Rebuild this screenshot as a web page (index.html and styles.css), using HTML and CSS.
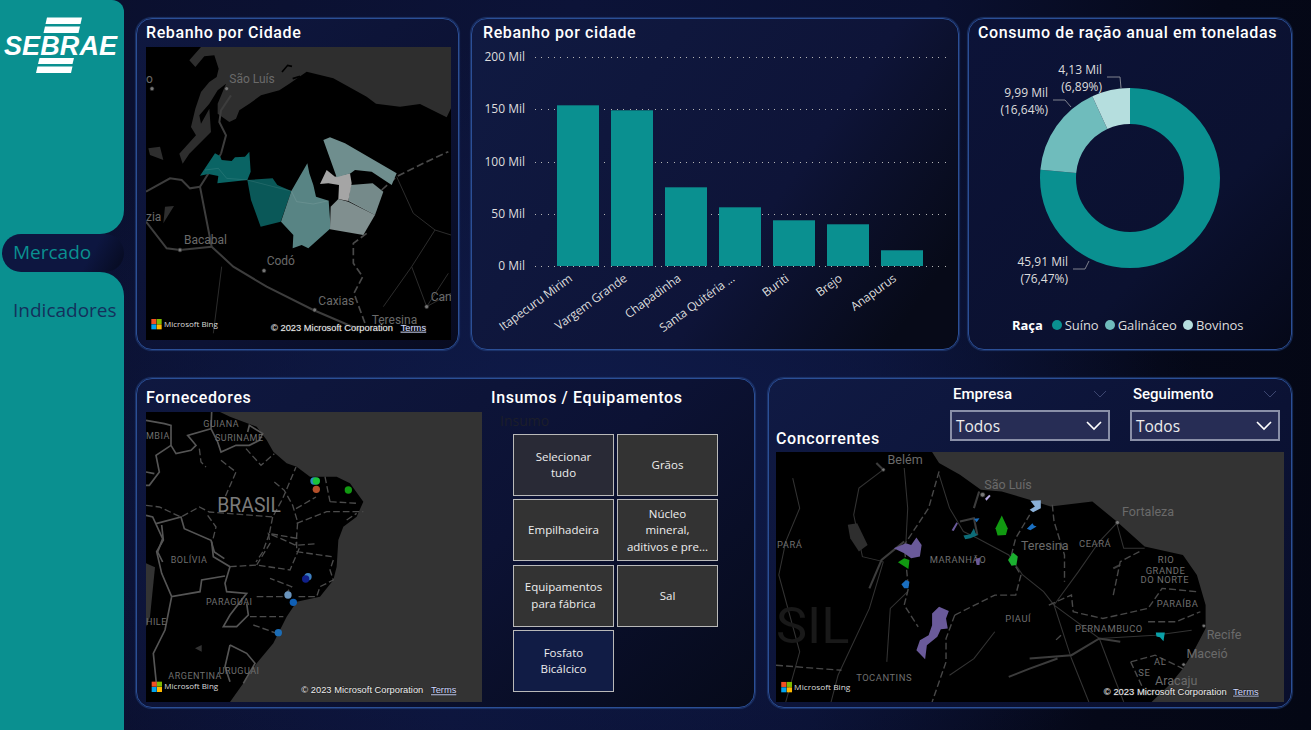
FILE: index.html
```html
<!DOCTYPE html>
<html>
<head>
  <title>Painel Sebrae - Mercado</title>
  <meta name="viewport" content="width=device-width, initial-scale=1">
  <link rel="stylesheet" href="styles.css">
</head>
<body>
  <aside class="sidebar">
    <div class="side-top">
      <svg class="logo" viewBox="0 0 124 80" width="124" height="80">
        <polygon points="47,17.5 82,17.5 80.5,24 45.5,24" fill="#fff"/>
        <polygon points="45,26.5 80,26.5 78.5,33 43.5,33" fill="#fff"/>
        <polygon points="39.5,58 74,58 72.5,64 38,64" fill="#fff"/>
        <polygon points="37.5,66.5 72.5,66.5 71,73 36,73" fill="#fff"/>
        <text class="logo-text" x="4" y="55">SEBRAE</text>
      </svg>
    </div>
    <div class="side-tab"><div class="tab-pill">Mercado</div></div>
    <div class="side-bottom"><div class="side-link">Indicadores</div></div>
  </aside>

  <main class="main">
    <div class="row row-top">
      <section class="panel panel-city">
        <h2 class="title">Rebanho por Cidade</h2>
        <svg class="map map-city" viewBox="438 141 915 879" preserveAspectRatio="none">
          <rect x="438" y="141" width="915" height="879" fill="#000"/>
          <g transform="translate(438 141)">
            <path class="sea" d="M165 0L130 40L148 60L175 28L205 25L218 65L212 90L190 105L165 135L148 185L135 240L150 265L100 320L110 350L130 320L195 255L190 185L165 230L160 205L190 170L215 130L240 110L215 170L215 200L250 225L270 215L280 190L310 170L345 145L400 130L430 110L482 74L562 94L662 149L690 170L762 179L822 171L902 211L915 184L915 0Z"/>
            <path class="coast-line" d="M408 75L425 55L438 58M440 95L462 88"/>
            <path class="road" d="M255 145L225 190L220 225L240 265L225 320"/>
          </g>
          <path class="road" d="M663 461L600 560L635 740L700 800L800 860L940 930L1080 990"/>
          <path class="road" d="M438 575L510 535L545 540L570 565L600 560"/>
          <path class="road" d="M438 665L500 745L540 750L635 740"/>
          <path class="dash" d="M1100 700L1060 730L1060 790L1088 830L1062 880L1095 970"/>
          <path class="dash" d="M1145 570L1190 530L1270 490L1345 455"/>
          <path class="thin" d="M1190 530L1240 640L1305 690L1235 800L1280 920L1345 820"/>
          <path class="thin" d="M1305 690L1353 705M1280 920L1353 880M665 800L640 1000M1235 800L1150 920"/>
          <path class="fill-dim" d="M445 445L480 440L490 480L450 465ZM495 620L522 618L490 670Z"/>
          <g class="city-dots">
            <circle cx="680" cy="266" r="6"/><circle cx="456" cy="266" r="6"/><circle cx="540" cy="750" r="6"/>
            <circle cx="792" cy="812" r="6"/><circle cx="944" cy="930" r="6"/><circle cx="1280" cy="920" r="6"/>
          </g>
          <g transform="translate(570 390)">
            <path fill="#0a6464" d="M30 137L75 70L90 78L95 90L125 93L135 82L165 80L178 65L182 125L172 150L82 160L85 138L55 132Z"/>
            <path fill="#0a5858" d="M172 150L248 145L262 165L304 183L272 275L212 290L183 210Z"/>
            <path fill="#588484" d="M304 183L352 100L358 130L370 165L378 200L416 212L422 295L355 355L335 345L308 355L310 315L273 275Z"/>
            <path fill="#808f8f" d="M422 230L445 207L475 215L555 255L520 315L420 298Z"/>
            <path fill="#758a8a" d="M475 213L482 165L548 160L580 185L555 255Z"/>
            <path fill="#a5a5a5" d="M390 162L410 120L435 140L480 130L485 160L475 213L445 207L447 165L415 160Z"/>
            <path fill="#6f8e8e" d="M400 30L420 22L465 40L620 130L605 165L545 125L495 120L482 130L440 142Z"/>
            <path class="region-line" d="M45 120L85 115L110 145L172 150L250 170L304 183L320 215L370 222L416 212M478 213L555 255"/>
          </g>
          <g class="map-label">
            <text x="688" y="250">São Luís</text><text x="438" y="250">o</text><text x="438" y="662">zia</text>
            <text x="552" y="733">Bacabal</text><text x="800" y="795">Codó</text><text x="955" y="914">Caxias</text>
            <text x="1115" y="972">Teresina</text><text x="1292" y="904">Cam</text>
          </g>
          <g transform="translate(454 957)">
            <rect width="15" height="15" fill="#f25022"/><rect x="16" width="15" height="15" fill="#7fba00"/>
            <rect y="16" width="15" height="15" fill="#00a4ef"/><rect x="16" y="16" width="15" height="15" fill="#ffb900"/>
          </g>
          <text class="bing" x="492" y="981">Microsoft Bing</text>
          <text class="copy" x="813" y="992">© 2023 Microsoft Corporation</text>
          <text class="terms" x="1202" y="992">Terms</text>
        </svg>
      </section>

      <section class="panel panel-bars">
        <h2 class="title">Rebanho por cidade</h2>
        <div class="chart">
          <div class="y-axis">
            <span>200 Mil</span><span>150 Mil</span><span>100 Mil</span><span>50 Mil</span><span>0 Mil</span>
          </div>
          <div class="plot">
            <div class="gridlines"><i></i><i></i><i></i><i></i><i></i></div>
            <div class="bars">
              <div class="bar" style="height:161px"></div>
              <div class="bar" style="height:156px"></div>
              <div class="bar" style="height:79px"></div>
              <div class="bar" style="height:59px"></div>
              <div class="bar" style="height:46px"></div>
              <div class="bar" style="height:42px"></div>
              <div class="bar" style="height:16px"></div>
            </div>
          </div>
          <div class="x-labels">
            <div class="x-cell"><span>Itapecuru Mirim</span></div>
            <div class="x-cell"><span>Vargem Grande</span></div>
            <div class="x-cell"><span>Chapadinha</span></div>
            <div class="x-cell"><span>Santa Quitéria ...</span></div>
            <div class="x-cell"><span>Buriti</span></div>
            <div class="x-cell"><span>Brejo</span></div>
            <div class="x-cell"><span>Anapurus</span></div>
          </div>
        </div>
      </section>

      <section class="panel panel-donut">
        <h2 class="title">Consumo de ração anual em toneladas</h2>
        <svg class="donut" viewBox="969 43 322 267" width="322" height="267">
          <g transform="rotate(-90 1130 178)" fill="none" stroke-width="36">
            <circle cx="1130" cy="178" r="72" stroke="#0a9090" pathLength="100" stroke-dasharray="76.47 100"/>
            <circle cx="1130" cy="178" r="72" stroke="#6fbcbc" pathLength="100" stroke-dasharray="16.64 100" stroke-dashoffset="-76.47"/>
            <circle cx="1130" cy="178" r="72" stroke="#b5dede" pathLength="100" stroke-dasharray="6.89 100" stroke-dashoffset="-93.11"/>
          </g>
          <path class="leader" d="M1107 77H1120L1121 88M1053 100H1065L1071 107M1073 269H1085L1089 261"/>
          <g class="donut-label">
            <text x="1102" y="74">4,13 Mil</text><text x="1102" y="91">(6,89%)</text>
            <text x="1048" y="97">9,99 Mil</text><text x="1048" y="114">(16,64%)</text>
            <text x="1068" y="266">45,91 Mil</text><text x="1068" y="283">(76,47%)</text>
          </g>
        </svg>
        <div class="legend">
          <strong>Raça</strong>
          <span class="legend-item"><i class="dot dot-a"></i>Suíno</span>
          <span class="legend-item"><i class="dot dot-b"></i>Galináceo</span>
          <span class="legend-item"><i class="dot dot-c"></i>Bovinos</span>
        </div>
      </section>
    </div>

    <div class="row">
      <section class="panel panel-suppliers">
        <div class="suppliers-map">
          <h2 class="title title-low">Fornecedores</h2>
          <svg class="map map-brazil" viewBox="48 126 1008 870" preserveAspectRatio="none">
            <rect x="48" y="126" width="1008" height="870" fill="#333"/>
            <path fill="#000" d="M48 126L270 126L300 140L380 170L410 210L430 245L470 280L500 290L540 320L620 320L660 340L700 395L680 440L640 470L625 510L620 590L610 630L570 680L500 695L470 740L430 820L380 880L340 940L300 996L48 996Z"/>
            <path fill="#333" d="M48 580L75 592L60 740L48 770Z"/>
            <g transform="translate(48 126)">
              <path class="border" d="M0 25L55 35L75 40L75 100L90 125L135 115L150 100L125 70L195 50L215 90L225 120L270 100L310 100L340 85L350 65L310 40L305 60M195 50L197 0M75 100L30 130L40 180L10 220L0 220M0 180L25 185M0 310L20 315L50 380L35 420L50 450M30 335L105 315L115 350L195 385L205 420L235 440"/>
              <path class="dash-b" d="M160 110L165 150L180 165M225 145L270 180L235 260M0 280L40 285L105 315L160 285L190 300L380 315L410 260L450 165M380 315L370 365L450 400L510 395M300 110L345 160L385 125M185 310L210 345L200 385M450 290L510 255M370 365L350 420L330 450M385 210L415 235L440 280L455 330L450 400"/>
            </g>
            <path class="border" d="M245 515L250 560L300 590L285 640L290 665L350 670L300 735L280 770L320 770L355 735L350 700M95 465L100 510L80 545L95 610L125 680L210 665L215 630L285 618M125 680L105 780L70 850L80 950"/>
            <path class="border" d="M300 825L350 850L375 880L340 940M300 825L285 890L300 935"/>
            <path class="dash-b" d="M500 545L605 560M500 460L590 425L700 425M585 320L600 395M380 585L420 520L415 490L500 505L500 545M300 590L380 585L480 600L510 530M380 680L460 680L485 650L420 625M360 740L460 740M370 765L440 790M600 395L680 400M650 450L680 430M610 570L600 600L610 630L570 650L560 680L500 680"/>
            <path fill="#333" d="M195 835L215 825L215 845Z"/>
            <g class="map-label">
              <text x="220" y="170" class="sm">GUIANA</text><text x="255" y="213" class="sm">SURINAME</text>
              <text x="48" y="206" class="sm">MBIA</text><text x="262" y="425" class="lg">BRASIL</text>
              <text x="122" y="580" class="sm">BOLÍVIA</text><text x="228" y="705" class="sm">PARAGUAI</text>
              <text x="48" y="766" class="sm">HILE</text><text x="266" y="911" class="sm">URUGUAI</text>
              <text x="115" y="928" class="sm">ARGENTINA</text>
            </g>
            <circle cx="552" cy="333" r="11" fill="#2a8cc0"/><circle cx="559" cy="333" r="11" fill="#1cc33c"/>
            <circle cx="559" cy="358" r="11" fill="#b5502a"/><circle cx="655" cy="360" r="11" fill="#119911"/>
            <circle cx="534" cy="620" r="11" fill="#3d7fc0"/><circle cx="527" cy="627" r="11" fill="#10208a"/>
            <circle cx="474" cy="675" r="11" fill="#6a94bd"/><circle cx="490" cy="697" r="11" fill="#0f5fb5"/>
            <circle cx="445" cy="788" r="11" fill="#1b6cb5"/>
            <g transform="translate(65 935)">
              <rect width="15" height="15" fill="#f25022"/><rect x="16" width="15" height="15" fill="#7fba00"/>
              <rect y="16" width="15" height="15" fill="#00a4ef"/><rect x="16" y="16" width="15" height="15" fill="#ffb900"/>
            </g>
            <text class="bing" x="103" y="958">Microsoft Bing</text>
            <text class="copy" x="514" y="970">© 2023 Microsoft Corporation</text>
            <text class="terms" x="903" y="970">Terms</text>
          </svg>
        </div>
        <div class="supplies">
          <h2 class="title title-low">Insumos / Equipamentos</h2>
          <div class="slicer-name">Insumo</div>
          <div class="slicer">
            <div class="chip chip-all">Selecionar<br>tudo</div>
            <div class="chip">Grãos</div>
            <div class="chip">Empilhadeira</div>
            <div class="chip">Núcleo<br>mineral,<br>aditivos e pre...</div>
            <div class="chip">Equipamentos<br>para fábrica</div>
            <div class="chip">Sal</div>
            <div class="chip chip-on">Fosfato<br>Bicálcico</div>
          </div>
        </div>
      </section>

      <section class="panel panel-rivals">
        <div class="rivals-head">
          <h2 class="title title-rivals">Concorrentes</h2>
          <div class="filter filter-a">
            <div class="filter-label">Empresa
              <svg class="chev-faint" width="14" height="8" viewBox="0 0 14 8"><path d="M1 1L7 7L13 1"/></svg>
            </div>
            <div class="dropdown">Todos
              <svg class="chev" width="16" height="10" viewBox="0 0 16 10"><path d="M1 1L8 8L15 1"/></svg>
            </div>
          </div>
          <div class="filter filter-b">
            <div class="filter-label">Seguimento
              <svg class="chev-faint" width="14" height="8" viewBox="0 0 14 8"><path d="M1 1L7 7L13 1"/></svg>
            </div>
            <div class="dropdown">Todos
              <svg class="chev" width="16" height="10" viewBox="0 0 16 10"><path d="M1 1L8 8L15 1"/></svg>
            </div>
          </div>
        </div>
        <svg class="map map-north" viewBox="32 232 1458 748" preserveAspectRatio="none">
          <rect x="32" y="232" width="1458" height="748" fill="#333"/>
          <path fill="#000" d="M32 232L480 232L500 265L560 300L620 345L680 350L760 375L820 395L940 380L1010 440L1090 515L1200 540L1240 600L1265 690L1265 760L1230 830L1200 880L1165 925L1110 980L32 980Z"/>
          <path class="thin-n" d="M340 285L270 340L255 420L280 545L340 560M400 280L410 400L405 500M500 300L530 400L570 470L610 490L700 540L740 600L800 650L830 690L880 850L930 980M1010 445L960 500L900 590L830 690M1010 445L1030 520L1090 520M830 690L960 790L1120 780L1225 765M960 790L1000 900L1030 980M340 560L300 700L210 900L190 980M410 650L360 700L350 860M660 770L600 850L530 900M80 310L100 400L60 500L40 600L100 830L60 980"/>
          <path class="road-n" d="M340 285L320 265M600 400L615 350M560 440L600 430L610 480M400 500L335 555L300 640M1000 580L1020 570M760 850L880 840L960 790L1020 800M700 905L760 880L840 850"/>
          <path class="dash-n" d="M500 290L470 400L400 510L412 640L400 690L440 755M545 720L520 790L520 860L480 980M545 720L660 660L720 660L735 600L705 550L720 490L760 420M825 390L830 440L860 540L860 620M815 690L880 660L885 710L970 730L1100 700L1140 640L1240 650M1000 660L1020 560L1075 530M1100 740L1180 740L1250 710M32 870L220 885M850 780L830 800M1050 860L1120 840L1200 880M1050 860L1090 950"/>
          <path fill="#2e2e2e" d="M238 450L265 445L295 510L270 530L245 490Z"/>
          <g class="map-label">
            <text x="32" y="805" class="huge">SIL</text>
            <text x="352" y="268">Belém</text><text x="630" y="343">São Luís</text><text x="1025" y="424">Fortaleza</text>
            <text x="35" y="520" class="sm">PARÁ</text><text x="473" y="565" class="sm">MARANHÃO</text>
            <text x="735" y="524">Teresina</text><text x="902" y="515" class="sm">CEARÁ</text>
            <text x="1128" y="565" class="sm">RIO</text><text x="1093" y="596" class="sm">GRANDE</text><text x="1078" y="624" class="sm">DO NORTE</text>
            <text x="1125" y="695" class="sm">PARAÍBA</text><text x="690" y="740" class="sm">PIAUÍ</text>
            <text x="890" y="770" class="sm">PERNAMBUCO</text><text x="1268" y="792">Recife</text><text x="1210" y="848">Maceió</text>
            <text x="1117" y="870" class="sm">AL</text><text x="1072" y="902" class="sm">SE</text><text x="1120" y="930">Aracaju</text>
            <text x="262" y="917" class="sm">TOCANTINS</text>
          </g>
          <g class="city-dots">
            <circle cx="340" cy="285" r="5"/><circle cx="625" cy="360" r="7"/><circle cx="1012" cy="443" r="6"/>
            <circle cx="1260" cy="752" r="5"/><circle cx="1202" cy="868" r="5"/>
          </g>
          <path fill="#6a5a9a" d="M370 520L405 505L420 510L435 488L450 510L445 545L420 550L400 535Z"/>
          <path fill="#119911" d="M382 562L400 550L415 555L412 582Z"/>
          <path fill="#1a6fc0" d="M392 628L405 615L415 620L412 640L400 640Z"/>
          <path fill="#6a5a9a" d="M480 715L500 695L528 708L520 730L525 760L505 762L495 785L465 810L460 852L435 825L445 795L470 780L480 750Z"/>
          <path fill="#119911" d="M662 460L680 422L697 460L692 480L668 482Z"/>
          <path fill="#1bb030" d="M698 555L712 533L726 545L722 570L708 572Z"/>
          <path fill="#0c6c78" d="M570 482L590 478L600 460L605 475L612 480L590 490L575 493Z"/>
          <path fill="#1a6fc0" d="M600 432L616 430L608 442ZM752 462L768 445L772 452L780 455L762 466Z"/>
          <path fill="#8ab0d8" d="M762 378L792 376L792 400L770 412L760 405L775 395Z"/>
          <path fill="#6a5a9a" d="M536 466L550 442L554 446L542 468ZM604 552L618 548L616 570L608 570Z"/>
          <path fill="#b5a8e0" d="M632 372L644 360L648 364L636 378Z"/>
          <path fill="#0aa0a8" d="M1122 772L1148 772L1144 798L1134 786L1124 784Z"/>
          <g transform="translate(47 920)">
            <rect width="15" height="15" fill="#f25022"/><rect x="16" width="15" height="15" fill="#7fba00"/>
            <rect y="16" width="15" height="15" fill="#00a4ef"/><rect x="16" y="16" width="15" height="15" fill="#ffb900"/>
          </g>
          <text class="bing" x="84" y="944">Microsoft Bing</text>
          <text class="copy copy-north" x="973" y="958">© 2023 Microsoft Corporation</text>
          <text class="terms copy-north" x="1344" y="958">Terms</text>
        </svg>
      </section>
    </div>
  </main>
</body>
</html>
```

FILE: styles.css
```css
*, *::before, *::after {
  box-sizing: border-box;
  margin: 0;
  padding: 0;
}

html, body {
  height: 100%;
}

body {
  display: flex;
  overflow: hidden;
  font-family: "Open Sans", sans-serif;
  color: #fff;
  background:
    radial-gradient(ellipse 620px 420px at 45% 62%, #0f1b4a 0%, rgba(15, 27, 74, 0) 100%),
    linear-gradient(100deg, #0a0f2c 0%, #0c1338 40%, #0a1030 65%, #050818 85%, #040714 100%);
}

/* sidebar */
.sidebar {
  display: flex;
  flex-direction: column;
  width: 124px;
  height: 730px;
  flex: none;
}

.side-top {
  height: 234px;
  background: #0a9090;
  border-radius: 0 0 24px 0;
  border-top-right-radius: 12px;
}

.logo {
  display: block;
}

.logo-text {
  font-family: "Liberation Sans", sans-serif;
  font-size: 27px;
  font-weight: bold;
  font-style: italic;
  letter-spacing: 0.1px;
  fill: #fff;
}

.side-tab {
  height: 38px;
  padding-left: 2px;
  background: linear-gradient(to right, #0a9090 50%, transparent 50%);
}

.tab-pill {
  height: 38px;
  padding-left: 11px;
  line-height: 37px;
  font-size: 19px;
  color: #0a9090;
  border-radius: 19px;
  background: linear-gradient(120deg, #0d1640 0%, #0d1640 70%, #060a1e 100%);
}

.side-bottom {
  flex: 1;
  padding: 22px 0 0 13px;
  background: #0a9090;
  border-radius: 0 24px 0 0;
}

.side-link {
  font-size: 19px;
  line-height: 32px;
  color: #14305c;
  white-space: nowrap;
}

/* panels */
.main {
  padding: 18px 0 0 12px;
}

.row {
  display: flex;
}

.row-top {
  margin-bottom: 28px;
}

.panel {
  height: 332px;
  border: 1px solid #2b4f96;
  border-radius: 16px;
  box-shadow: 0 0 1px 1px rgba(41, 75, 140, 0.6);
  background: linear-gradient(135deg, #0f1840 0%, #0c1234 60%, #080b20 100%);
}

.title {
  padding: 4px 0 0 9px;
  font-family: "Roboto", sans-serif;
  font-size: 16px;
  line-height: 20px;
  font-weight: 500;
  letter-spacing: 0.6px;
  color: #fff;
  white-space: nowrap;
}

.title-low {
  padding-top: 9px;
}

.map {
  display: block;
}

.map-city {
  width: 305px;
  height: 293px;
  margin: 4px 0 0 9px;
}

.sea {
  fill: #2e2e2e;
}

.coast-line {
  fill: none;
  stroke: #000;
  stroke-width: 5;
}

.road {
  fill: none;
  stroke: #3d3d3d;
  stroke-width: 6;
}

.thin {
  fill: none;
  stroke: #2c2c2c;
  stroke-width: 3;
}

.dash {
  fill: none;
  stroke: #4a4a4a;
  stroke-width: 5;
  stroke-dasharray: 22 10;
}

.fill-dim {
  fill: #2e2e2e;
}

.region-line {
  fill: none;
  stroke: rgba(255, 255, 255, 0.14);
  stroke-width: 2;
}

.city-dots circle {
  fill: #777;
  stroke: #222;
  stroke-width: 2;
}

.map-label text {
  font-family: "Roboto", sans-serif;
  font-size: 36px;
  fill: #6a6a6a;
}

.map-label .sm {
  font-size: 27px;
  letter-spacing: 1.5px;
  fill: #6f6f6f;
}

.map-label .lg {
  font-size: 58px;
  fill: #7b7b7b;
}

.map-label .huge {
  font-size: 150px;
  fill: #191919;
}

.bing {
  font-family: "Open Sans", sans-serif;
  font-size: 24px;
  fill: #ddd;
}

.copy, .terms {
  font-family: "Liberation Sans", sans-serif;
  font-size: 28px;
  fill: #eee;
  paint-order: stroke;
  stroke: #222;
  stroke-width: 3px;
}

.terms {
  fill: #cfd8ff;
  text-decoration: underline;
}

.copy-north {
  font-size: 27px;
}

/* bar chart */
.panel-city {
  width: 323px;
}

.panel-bars {
  width: 488px;
  margin-left: 12px;
  background: linear-gradient(125deg, #101a42 0%, #0e1438 60%, #070a18 90%);
}

.panel-bars .title {
  padding-left: 11px;
}

.chart {
  display: grid;
  grid-template-columns: 41px 411px;
  column-gap: 10px;
  margin: 6px 0 0 12px;
}

.y-axis {
  display: flex;
  flex-direction: column;
  justify-content: space-between;
  height: 225px;
  font-size: 12px;
  line-height: 16px;
  text-align: right;
  color: #ddd;
  white-space: nowrap;
}

.plot {
  position: relative;
  height: 210px;
  margin-top: 8px;
}

.gridlines {
  position: absolute;
  inset: 0;
  display: flex;
  flex-direction: column;
  justify-content: space-between;
}

.gridlines i {
  display: block;
  height: 1px;
  background: repeating-linear-gradient(to right, #b5b5b5 0 1px, transparent 1px 6.3px);
}

.bars {
  position: relative;
  display: flex;
  align-items: flex-end;
  gap: 12px;
  height: 209px;
  padding-left: 22px;
}

.bar {
  width: 42px;
  background: #0a9090;
  border-top: 1px solid #0c6a74;
}

.x-labels {
  grid-column: 2;
  display: flex;
  margin: -8px 0 0 16px;
}

.x-cell {
  position: relative;
  width: 54px;
  height: 70px;
}

.x-cell span {
  position: absolute;
  top: 3px;
  right: 34px;
  font-size: 12px;
  line-height: 16px;
  letter-spacing: -0.2px;
  color: #ddd;
  white-space: nowrap;
  transform-origin: 100% 50%;
  transform: rotate(-36deg);
}

/* donut */
.panel-donut {
  width: 324px;
  margin-left: 9px;
  background: linear-gradient(135deg, #0c1338 0%, #0b1130 65%, #050818 100%);
}

.donut {
  display: block;
}

.leader {
  fill: none;
  stroke: #80838f;
  stroke-width: 1;
}

.donut-label text {
  font-family: "Open Sans", sans-serif;
  font-size: 12px;
  fill: #ddd;
  text-anchor: end;
}

.legend {
  display: flex;
  align-items: center;
  gap: 6px;
  margin: 6px 0 0 43px;
  font-size: 13px;
  line-height: 18px;
  letter-spacing: -0.06px;
  color: #ddd;
}

.legend strong {
  margin-right: 3px;
  color: #fff;
}

.legend-item {
  display: flex;
  align-items: center;
  gap: 3px;
}

.dot {
  width: 10px;
  height: 10px;
  border-radius: 50%;
}

.dot-a { background: #0a9090; }
.dot-b { background: #6fbcbc; }
.dot-c { background: #b5dede; }

/* fornecedores */
.panel-suppliers {
  display: flex;
  width: 619px;
  height: 330px;
  background: linear-gradient(140deg, #0f1840 0%, #0c1234 55%, #060a1a 100%);
}

.suppliers-map {
  width: 345px;
  flex: none;
}

.map-brazil {
  width: 336px;
  height: 290px;
  margin: 4px 0 0 9px;
}

.supplies .title {
  padding-left: 0;
  margin-left: 9px;
}

.slicer-name {
  margin: 3px 0 0 18px;
  font-size: 14px;
  line-height: 20px;
  color: #1c1e2a;
}

.slicer {
  display: grid;
  grid-template-columns: 101px 101px;
  grid-auto-rows: 62px;
  column-gap: 3px;
  row-gap: 3.4px;
  margin: 3px 0 0 31px;
}

.chip {
  display: flex;
  align-items: center;
  justify-content: center;
  font-size: 11.5px;
  line-height: 16.5px;
  text-align: center;
  color: #eee;
  background: #333;
  border: 1px solid #b9b9b9;
}

.chip-all {
  background: #292a36;
}

.chip-on {
  background: #111c45;
}

/* concorrentes */
.panel-rivals {
  width: 524px;
  height: 330px;
  margin-left: 13px;
  background: linear-gradient(140deg, #101a44 0%, #0b1234 60%, #0a0f2c 100%);
}

.rivals-head {
  display: flex;
  height: 69px;
  padding: 5px 0 0 7px;
}

.title-rivals {
  align-self: flex-end;
  width: 174px;
  flex: none;
  padding: 0;
  margin-bottom: -1px;
}

.filter {
  flex: none;
}

.filter-a {
  width: 160px;
  margin-right: 20px;
}

.filter-b {
  width: 150px;
}

.filter-label {
  display: flex;
  align-items: center;
  justify-content: space-between;
  padding: 0 3px;
  font-family: "Roboto", sans-serif;
  font-size: 15px;
  font-weight: 500;
  line-height: 20px;
}

.chev-faint path {
  fill: none;
  stroke: #3c4670;
}

.dropdown {
  display: flex;
  align-items: center;
  justify-content: space-between;
  height: 31px;
  margin-top: 6px;
  padding: 0 6px 0 4px;
  font-size: 15.5px;
  color: #eee;
  background: #272d55;
  border: 2px solid #8a90a8;
}

.chev path {
  fill: none;
  stroke: #fff;
  stroke-width: 1.6;
}

.map-north {
  width: 508px;
  height: 250px;
  margin: 4px 0 0 7px;
}

.road-n {
  fill: none;
  stroke: #3c3c3c;
  stroke-width: 6;
}

.thin-n {
  fill: none;
  stroke: #333;
  stroke-width: 3;
}

.dash-n {
  fill: none;
  stroke: #484848;
  stroke-width: 4;
  stroke-dasharray: 20 9;
}

.border {
  fill: none;
  stroke: #555;
  stroke-width: 5;
}

.dash-b {
  fill: none;
  stroke: #4c4c4c;
  stroke-width: 4;
  stroke-dasharray: 20 9;
}
```
